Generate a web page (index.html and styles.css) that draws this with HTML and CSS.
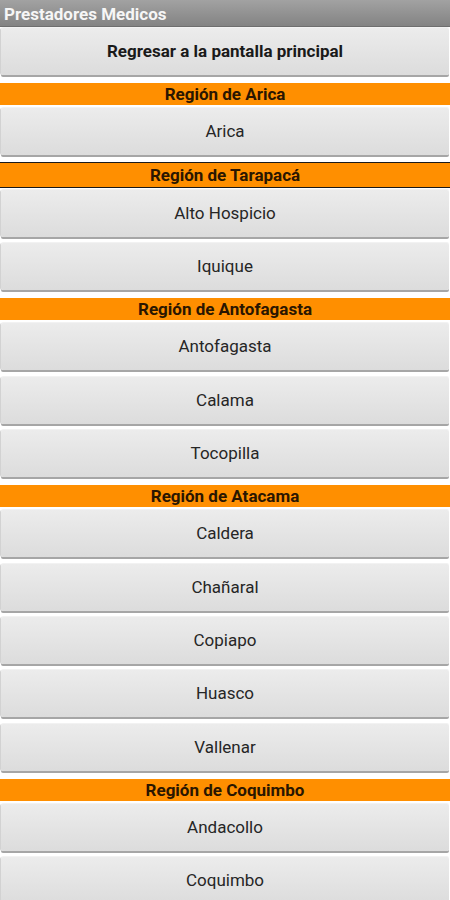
FILE: index.html
```html
<!DOCTYPE html>
<html lang="es">
<head>
  <meta charset="UTF-8">
  <meta name="viewport" content="width=device-width, initial-scale=1.0">
  <title>Prestadores Medicos</title>
  <link rel="stylesheet" href="styles.css">
</head>
<body>

<header class="titlebar">Prestadores Medicos</header>

<main class="list">
  <button class="btn btn-main">Regresar a la pantalla principal</button>

  <div class="region">Región de Arica</div>
  <button class="btn">Arica</button>

  <div class="region region-lined">Región de Tarapacá</div>
  <button class="btn">Alto Hospicio</button>
  <button class="btn">Iquique</button>

  <div class="region">Región de Antofagasta</div>
  <button class="btn">Antofagasta</button>
  <button class="btn">Calama</button>
  <button class="btn">Tocopilla</button>

  <div class="region">Región de Atacama</div>
  <button class="btn">Caldera</button>
  <button class="btn">Chañaral</button>
  <button class="btn">Copiapo</button>
  <button class="btn">Huasco</button>
  <button class="btn">Vallenar</button>

  <div class="region">Región de Coquimbo</div>
  <button class="btn">Andacollo</button>
  <button class="btn">Coquimbo</button>
</main>

</body>
</html>
```

FILE: styles.css
```css
body {
  margin: 0;
  padding: 0;
  background: #fff;
  font-family: Roboto, "Noto Sans", sans-serif;
}
.titlebar {
  height: 27px;
  line-height: 28px;
  padding-left: 4px;
  background: linear-gradient(#a2a2a2, #838383);
  color: #f6f6f6;
  font-size: 17px;
  font-weight: bold;
  border-bottom: 1px solid #6e6e6e;
  box-sizing: border-box;
}
.list {
  display: flex;
  flex-direction: column;
  padding-top: 1px;
}
.btn {
  height: 47px;
  margin: 0 1px 6.35px;
  padding: 0 0 1px;
  border: none;
  border-radius: 2px;
  background: linear-gradient(#ececec, #dcdcdc);
  box-shadow: 0 -1px 0 #f2f2f2, -1px 0 0 #d2d2d2, 0 2px 0 #a6a6a6;
  color: #262626;
  font-family: inherit;
  font-size: 17px;
  text-align: center;
}
.btn-main {
  font-weight: bold;
  color: #1a1a1a;
}
.region {
  height: 22px;
  line-height: 23px;
  margin: 2px 0 3px;
  background: #ff8f00;
  color: #2a1600;
  font-size: 17px;
  font-weight: bold;
  text-align: center;
}
.region-lined {
  height: 24px;
  line-height: 25px;
  margin: 0 0 2px;
  border-top: 1px solid #1a1a1a;
  border-bottom: 1px solid #1a1a1a;
}
```
